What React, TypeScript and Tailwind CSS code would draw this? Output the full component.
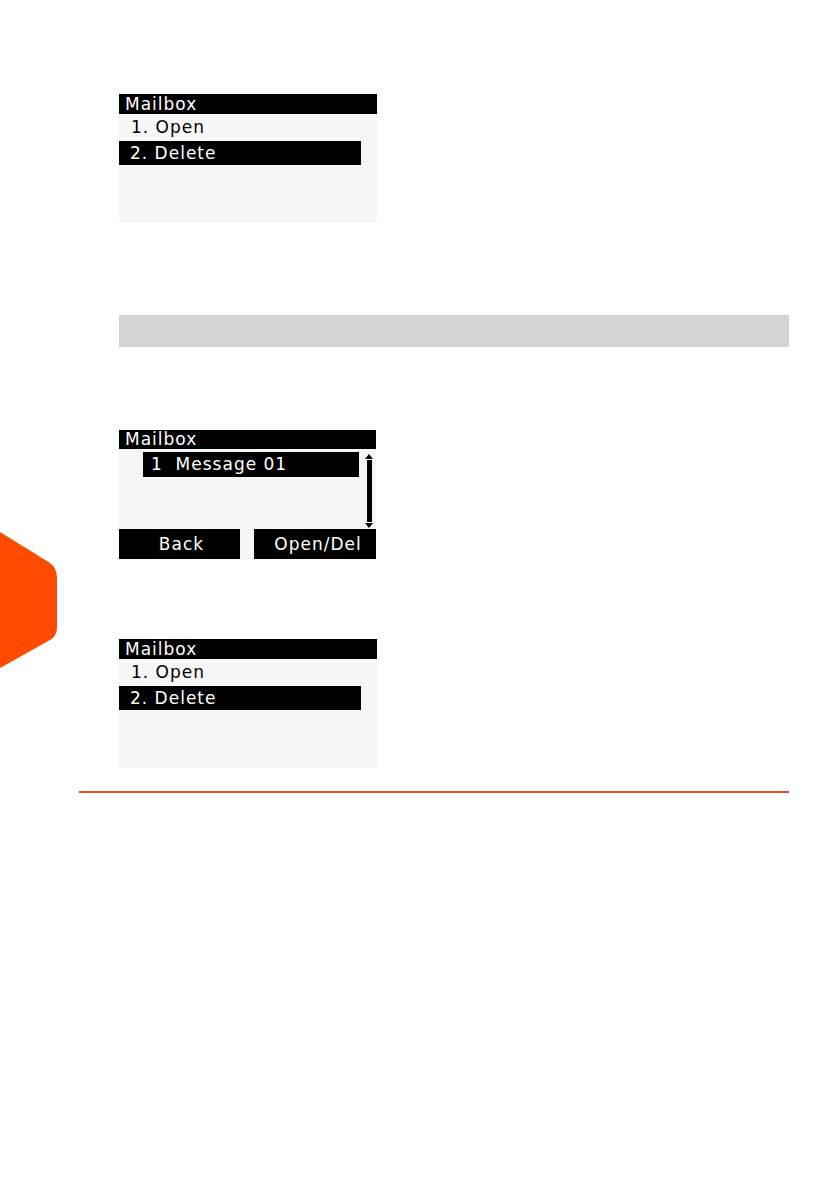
import React from "react";

const font = "font-['DejaVu_Sans',sans-serif] text-[17px] leading-none tracking-[1px]";

function MenuScreen() {
  return (
    <div className={`w-[258px] h-[129px] bg-[#f6f6f6] flex flex-col ${font}`}>
      <div className="h-[20px] bg-black text-white pl-[6px] flex items-center">Mailbox</div>
      <div className="h-[27px] pl-[12px] flex items-center text-black">1. Open</div>
      <div className="h-[24px] w-[242px] bg-black text-white pl-[11px] flex items-center">2. Delete</div>
    </div>
  );
}

function ListScreen() {
  return (
    <div className={`w-[257px] h-[130px] bg-[#f6f6f6] flex flex-col ${font}`}>
      <div className="h-[19px] bg-black text-white pl-[6px] flex items-center">Mailbox</div>
      <div className="flex flex-1 pt-[3px]">
        <div className="ml-[24px] w-[216px] h-[25px] bg-black text-white pl-[8px] flex items-center whitespace-pre">1  Message 01</div>
        <div className="ml-[6px] pt-[2px]">
          <svg width="8" height="74" viewBox="0 0 8 74">
            <path d="M4 0 L8 5 L0 5 Z" fill="#000" />
            <rect x="2" y="6" width="5" height="62" fill="#000" />
            <path d="M0 69 L8 69 L4 74 Z" fill="#000" />
          </svg>
        </div>
      </div>
      <div className="flex h-[31px] pb-[1px]">
        <div className="w-[121px] bg-black text-white flex items-center justify-center pl-[4px]">Back</div>
        <div className="ml-[14px] w-[122px] bg-black text-white flex items-center justify-center pl-[6px]">Open/Del</div>
      </div>
    </div>
  );
}

export default function App() {
  return (
    <div className="relative w-[839px] min-h-[1191px] bg-white">
      <svg className="absolute left-0 top-[530px]" width="58" height="138" viewBox="0 0 58 138">
        <path d="M0 2 L50 33 Q57 38 57 48 L57 97 Q57 106 50 110 L0 138 Z" fill="#ff4b00" />
      </svg>
      <div className="pl-[79px] pt-[94px]">
        <div className="ml-[40px]">
          <MenuScreen />
          <div className="mt-[92px] w-[670px] h-[32px] bg-[#d4d4d4]" />
          <div className="mt-[83px]">
            <ListScreen />
          </div>
          <div className="mt-[79px]">
            <MenuScreen />
          </div>
        </div>
        <div className="mt-[23px] w-[710px] h-[2px] bg-[#e2501f]" />
      </div>
    </div>
  );
}
